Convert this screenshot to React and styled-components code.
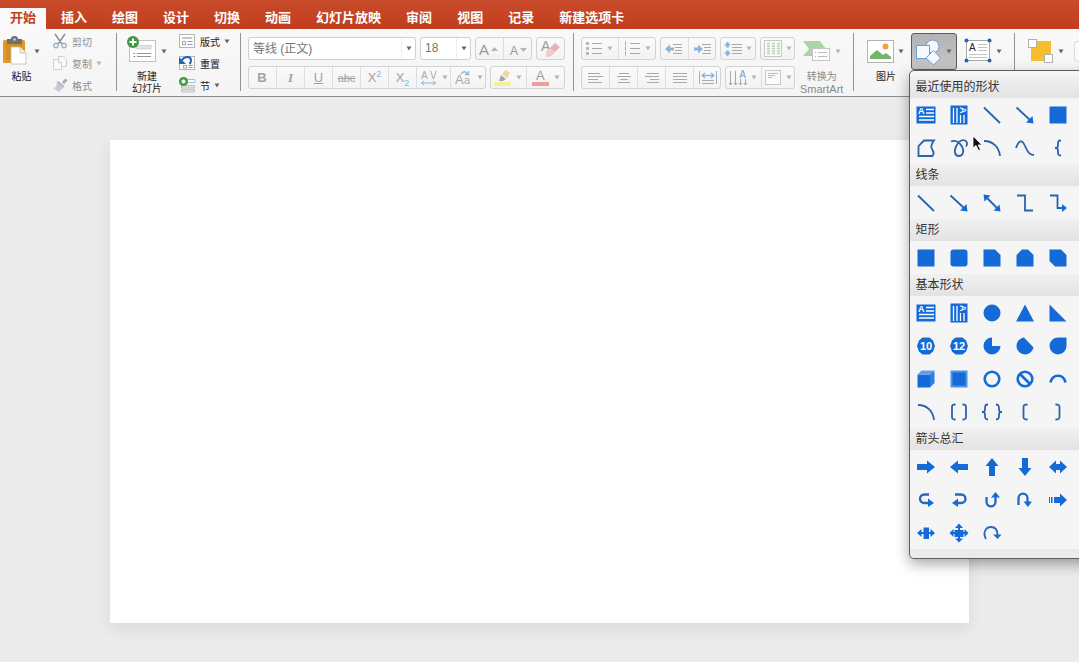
import React, { useState } from "react";
import styled, { createGlobalStyle, css } from "styled-components"

const GlobalStyle = createGlobalStyle`
  * {
    box-sizing: border-box;
  }

  body {
    margin: 0;
    background: #ebebeb;
    font-family: "Liberation Sans", "Noto Sans CJK SC", sans-serif;
  }

  button, input {
    font-family: inherit;
    margin: 0;
  }

  svg {
    display: block;
    flex: none;
  }
`

const BLUE = "#146bd8"
const LINE = "#2a62ae"
const GRAY = "#a9a9a9"
const PALE = "#8fb4dc"

const TABS = ["开始", "插入", "绘图", "设计", "切换", "动画", "幻灯片放映", "审阅", "视图", "记录", "新建选项卡"]

// ---- ribbon icons ----

const Caret = ({ faint }) => (
  <svg width="6" height="5" viewBox="0 0 6 5"><path d="M.5 .5h5L3 4.500z" fill={faint ? "#b4b4b4" : "#666"} /></svg>
)

const PasteIcon = () => (
  <svg width="27" height="30" viewBox="0 0 27 30">
    <rect x="0" y="4" width="22" height="23" rx="1.500" fill="#e09a2c" />
    <rect x="3" y="7" width="16" height="17" fill="#d88f22" />
    <path d="M4 8V3h4a3.500 3 0 0 1 7 0h4v5z" fill="#6a6f78" />
    <circle cx="11.500" cy="3.500" r="1.200" fill="#d8d8d8" />
    <path d="M8 11h9l6 6v11H8z" fill="#fff" stroke="#bbb" strokeWidth=".8" />
    <path d="M17 11v6h6" fill="#eee" stroke="#bbb" strokeWidth=".8" />
  </svg>
)

const CutIcon = () => (
  <svg width="16" height="16" viewBox="0 0 16 16" fill="none">
    <path d="M3 1l7 10M13 1L6 11" stroke="#8f8f8f" strokeWidth="1.500" />
    <circle cx="4" cy="12.500" r="2.200" stroke="#9fb6cf" strokeWidth="1.400" />
    <circle cx="12" cy="12.500" r="2.200" stroke="#9fb6cf" strokeWidth="1.400" />
  </svg>
)

const CopyIcon = () => (
  <svg width="16" height="16" viewBox="0 0 16 16" fill="#fafafa" stroke="#cfcfcf">
    <path d="M6.500 1.500h5l3 3v7h-8z" />
    <path d="M1.500 4.500h5l3 3v7h-8z" />
    <path d="M6.500 4.500v3h3" />
  </svg>
)

const BrushIcon = () => (
  <svg width="16" height="16" viewBox="0 0 16 16">
    <path d="M10 5l3.500-3.500 2 2L12 7z" fill="#a9a9a9" />
    <path d="M6 4l6.500 5-1.500 2-6.500-5z" fill="#a7bcd6" />
    <path d="M5 6l6 5-4 4-6-4c2 0 4-2 4-5z" fill="#c9c9c9" />
  </svg>
)

const Plus = ({ r = 5.5 }) => (
  <g>
    <circle cx={r} cy={r} r={r} fill="#3f9a3f" />
    <path d={`M${r} 2.5v${2 * r - 5}M2.500 ${r}h${2 * r - 5}`} stroke="#fff" strokeWidth="2" />
  </g>
)

const NewSlideIcon = () => (
  <svg width="30" height="30" viewBox="0 0 30 30">
    <rect x="2.500" y="4.500" width="26" height="21" fill="#fff" stroke="#c2c2c2" />
    <rect x="9" y="9.500" width="15" height="3.500" fill="#e4e4e4" stroke="#c8c8c8" strokeWidth=".7" />
    <path d="M10 17.500h14M10 20.500h14" stroke="#8797a9" />
    <path d="M6.500 17.500h1.500M6.500 20.500h1.500" stroke="#777" />
    <Plus r={6} />
  </svg>
)

const SlideFrame = ({ children }) => (
  <svg width="17" height="16" viewBox="0 0 17 16">
    <rect x=".5" y="1.500" width="15" height="13" fill="#fdfdfd" stroke="#b5b5b5" />
    {children}
  </svg>
)

const LayoutIcon = () => (
  <SlideFrame>
    <rect x="3" y="4" width="10" height="2" fill="#c6c6c6" />
    <rect x="3.500" y="8.500" width="3" height="3" fill="#fff" stroke="#a6a6a6" />
    <path d="M8.500 8.500h5M8.500 11.500h5" stroke="#7fa0cc" />
  </SlideFrame>
)

const ResetIcon = () => (
  <SlideFrame>
    <rect x="4.500" y="10.500" width="3" height="2.500" fill="#fff" stroke="#a6a6a6" />
    <path d="M9.500 10.500h4M9.500 12.500h4" stroke="#7fa0cc" />
    <path d="M2.500 5.500C6 .5 12 1 12 5.500c0 1.500-.5 2.500-1.500 3.500" fill="none" stroke="#2565b5" strokeWidth="2" />
    <path d="M0 2v7h7z" fill="#2565b5" />
  </SlideFrame>
)

const SectionIcon = () => (
  <svg width="17" height="16" viewBox="0 0 17 16">
    <path d="M8 2.500h8v3H8z" fill="#fff" stroke="#9cc0e0" />
    <path d="M2.500 8.500h13v2.500h-13zM2.500 12.500h13v2.500h-13z" fill="#e2e2e2" stroke="#b8b8b8" strokeWidth=".8" />
    <Plus r={4.5} />
  </svg>
)

const SpacingIcon = () => (
  <svg width="18" height="16" viewBox="0 0 18 16">
    <text x="1" y="9" fontSize="10" fill={GRAY}>A</text>
    <text x="10" y="9" fontSize="10" fill={GRAY}>V</text>
    <path d="M1 13h15M4 11l-2.500 2L4 15M13 11l2.500 2-2.500 2" fill="none" stroke={PALE} />
  </svg>
)

const CaseIcon = () => (
  <svg width="18" height="16" viewBox="0 0 18 16">
    <text x="0" y="14" fontSize="13" fill={GRAY}>A</text>
    <text x="9" y="14" fontSize="11" fill={GRAY}>a</text>
    <path d="M6 4c2-3 5-3 7 0M13.500 1v3.500H10" fill="none" stroke={PALE} strokeWidth="1.300" />
  </svg>
)

const GrowIcon = ({ down }) => (
  <svg width="20" height="16" viewBox="0 0 20 16">
    <text x={down ? 2 : 0} y="14" fontSize={down ? 12 : 15} fill="#999">A</text>
    <path d={down ? "M12 7h7l-3.500 4z" : "M12 10h7l-3.500-4z"} fill="#b5b5b5" />
  </svg>
)

const EraserIcon = () => (
  <svg width="20" height="20" viewBox="0 0 20 20">
    <text x="0" y="12" fontSize="14" fill="#999">A</text>
    <path d="M5 13l9-9 5 4-9 9-4 1z" fill="#e6b0b6" />
    <path d="M5 13l4-4 5 4-4 4-4 1z" fill="#eecdd0" />
  </svg>
)

const HighlightIcon = () => (
  <svg width="18" height="18" viewBox="0 0 18 18">
    <path d="M8 5l4-4 4 3-3 5z" fill="#f2d2a8" />
    <path d="M7 6l5 4-3 2H5z" fill="#a5a5a5" />
    <rect x="0" y="13" width="17" height="4" fill="#f1f09a" />
  </svg>
)

const FontColorIcon = () => (
  <svg width="18" height="18" viewBox="0 0 18 18">
    <text x="4" y="11" fontSize="13" fill="#999">A</text>
    <rect x="0" y="13" width="17" height="4" fill="#eda09b" />
  </svg>
)

const BulletsIcon = ({ numbered }) => (
  <svg width="17" height="16" viewBox="0 0 17 16">
    {[2.5, 7.5, 12.5].map((y) => (
      <g key={y}>
        {numbered
          ? <path d={`M1.500 ${y - 2}v4`} stroke={GRAY} />
          : <rect x="0" y={y - 1.5} width="3" height="3" rx="1" fill="#a8b4c8" />}
        <path d={`M6 ${y}h10`} stroke={GRAY} />
      </g>
    ))}
  </svg>
)

const IndentIcon = ({ right }) => (
  <svg width="18" height="16" viewBox="0 0 18 16">
    <path d="M8 3.500h9M10 6.500h7M10 9.500h7M8 12.500h9" stroke={GRAY} />
    <path d={right ? "M0 6.500h4V3.500l5 4.500-5 4.500V9.500H0z" : "M9 6.500H5V3.500L0 8l5 4.500V9.500h4z"} fill={PALE} />
  </svg>
)

const LineHeightIcon = () => (
  <svg width="18" height="16" viewBox="0 0 18 16">
    <path d="M8 3.500h10M8 6.500h10M8 9.500h10M8 12.500h10" stroke={GRAY} />
    <path d="M3.500 .5l3.500 4H5v2H2v-2H0zM3.500 15.500l3.500-4H5v-2H2v2H0z" fill={PALE} />
  </svg>
)

const ColumnsIcon = () => (
  <svg width="18" height="17" viewBox="0 0 18 17">
    <rect x=".5" y=".5" width="17" height="16" fill="#fbfbfb" stroke="#c8c8c8" />
    <path d="M3 3.500h3M3 6h3M3 8.500h3M3 11h3M3 13.500h3M8 3.500h3M8 6h3M8 8.500h3M8 11h3M8 13.500h3M13 3.500h3M13 6h3M13 8.500h3M13 11h3M13 13.500h3" stroke="#b3d6ad" strokeWidth="1.500" />
  </svg>
)

const ALIGN = {
  left: "M1 2.500h12M1 5.500h15M1 8.500h10M1 11.500h14",
  center: "M3 2.500h10M1 5.500h14M4 8.500h8M2 11.500h12",
  right: "M3 2.500h12M1 5.500h14M6 8.500h9M3 11.500h12",
  justify: "M1 2.500h14M1 5.500h14M1 8.500h14M1 11.500h14",
}

const AlignIcon = ({ type }) => (
  <svg width="16" height="14" viewBox="0 0 16 14"><path d={ALIGN[type]} stroke={GRAY} /></svg>
)

const DistributeIcon = () => (
  <svg width="18" height="16" viewBox="0 0 18 16" fill="none">
    <path d="M.5 1v13M17.500 1v13" stroke={PALE} />
    <path d="M3 5.500h12M6 3L3 5.500 6 8M12 3l3 2.500L12 8" stroke={PALE} strokeWidth="1.300" />
    <path d="M3 10.500h12M3 13.500h12" stroke={GRAY} />
  </svg>
)

const DirectionIcon = () => (
  <svg width="18" height="16" viewBox="0 0 18 16">
    <path d="M1.500 1v14M6.500 1v14M11.500 9v6M16.500 9v6M0 13l1.500 2L3 13M5 13l1.500 2L8 13M10 13l1.500 2 1.500-2M15 13l1.500 2 1.500-2" fill="none" stroke={GRAY} />
    <text x="10" y="8" fontSize="10" fontWeight="bold" fill={PALE}>A</text>
  </svg>
)

const TextAlignIcon = () => (
  <svg width="17" height="16" viewBox="0 0 17 16">
    <rect x=".5" y=".5" width="15" height="14" fill="#fbfbfb" stroke="#c8c8c8" />
    <path d="M3 3.500h10M3 5.500h7M3 7.500h4" stroke="#bbb" />
  </svg>
)

const SmartArtIcon = () => (
  <svg width="28" height="30" viewBox="0 0 28 30">
    <path d="M0 5h17l6 8-6 7H0l6-7z" fill="#a9d7a4" />
    <rect x="9.500" y="12.500" width="17" height="12" fill="#fdfdfd" stroke="#c6c6c6" />
    <path d="M12 16.500h1M15 16.500h9M12 20.500h1M15 20.500h9" stroke="#bbb" />
  </svg>
)

const PictureIcon = () => (
  <svg width="27" height="30" viewBox="0 0 27 30">
    <rect x=".5" y="4.500" width="26" height="22" fill="#fff" stroke="#b3b3b3" />
    <circle cx="18.500" cy="10.500" r="3" fill="#f0a236" />
    <path d="M3 23v-3l7-6 6 5 3-2 5 4v2z" fill="#74b566" />
  </svg>
)

const ShapesIcon = () => (
  <svg width="26" height="30" viewBox="0 0 26 30" fill="#f4f9ff" stroke="#6f9fd8">
    <circle cx="16.500" cy="9.500" r="6.500" />
    <rect x=".5" y="8.500" width="13" height="13" />
    <path d="M17.500 13.500l7 7.500-7 7-7.500-7z" />
  </svg>
)

const TextBoxIcon = () => (
  <svg width="28" height="30" viewBox="0 0 28 30">
    <rect x="2.500" y="4.500" width="23" height="20" fill="#fff" stroke="#a8a8a8" />
    <text x="5" y="15" fontSize="10" fill="#222">A</text>
    <path d="M14 8.500h9M14 11.500h9M14 14.500h9M5 18.500h18M5 21.500h18" stroke="#c2c2c2" />
    <g fill="#2f5fa8">
      <circle cx="2.500" cy="4.500" r="2" /><circle cx="25.500" cy="4.500" r="2" />
      <circle cx="2.500" cy="24.500" r="2" /><circle cx="25.500" cy="24.500" r="2" />
    </g>
  </svg>
)

const ArrangeIcon = () => (
  <svg width="26" height="30" viewBox="0 0 26 30">
    <rect x="3" y="5" width="20" height="20" fill="#f7bd2c" />
    <rect x=".5" y="3.500" width="8" height="8" fill="#fff" stroke="#b0b0b0" />
    <rect x="16.500" y="18.500" width="8" height="8" fill="#fff" stroke="#b0b0b0" />
  </svg>
)

// ---- gallery shapes, all on an 18 x 18 grid ----

const stroke = { fill: "none", stroke: LINE, strokeWidth: 1.8 }
const bend = { fill: "none", stroke: "#2468bf", strokeWidth: 2.3 }

const textBox = (
  <>
    <rect x="-.5" y=".5" width="19" height="17" fill={BLUE} />
    <text x="1" y="8" fontSize="9" fontWeight="bold" fill="#fff">A</text>
    <path d="M9 3.500h8M9 7h8M2 10.500h15M2 14h15" stroke="#fff" strokeWidth="1.300" />
  </>
)

const textBoxVertical = (
  <>
    <rect x=".5" y="-.5" width="17" height="19" fill={BLUE} />
    <text transform="translate(10 1) rotate(90)" fontSize="9" fontWeight="bold" fill="#fff">A</text>
    <path d="M3.500 2v15M7 2v15M10.500 9v8M14 9v8" stroke="#fff" strokeWidth="1.300" />
  </>
)

const polygon = (label) => (
  <>
    <path d="M5.500 .5h7L16 3.500 18 9l-2 5.500-3.500 3h-7L2 14.500 0 9l2-5.500z" fill={BLUE} />
    <text x="9" y="13" textAnchor="middle" fontSize="11" fontWeight="bold" fill="#fff">{label}</text>
  </>
)

const rightArrow = "M0 6h10V2.500L18 9l-8 6.500V12H0z"

const SHAPES = {
  textBox,
  textBoxVertical,
  line: <path d="M1 1.500L17 17" {...stroke} />,
  arrow: <><path d="M.5 1.500L14 14" {...stroke} /><path d="M17.500 17.500l-1-7.500-6.500 6.500z" fill={BLUE} /></>,
  doubleArrow: <><path d="M3 3l12 12" {...stroke} /><path d="M17.500 17.500l-1-7-6 6zM.5.5l1 7 6-6z" fill={BLUE} /></>,
  elbow: <path d="M1 1.500h8v15h8" {...stroke} />,
  elbowArrow: <><path d="M1 1.500h7.500v12.500H14" {...stroke} /><path d="M18 14l-5-4v8z" fill={BLUE} /></>,
  rect: <rect x=".5" y=".5" width="17" height="17" fill={BLUE} />,
  freeform: <path d="M1.500 17V7L7 1.500h10C13.500 6 14 9 15.500 11c1.500 2 1.500 4 0 6z" {...stroke} />,
  scribble: <path d="M1 2.500c4-1.500 8 0 11 5 2.500 4.500 1 9.500-3 9.500s-5.500-4.500-3-9.500C8.500 2.500 12 .5 15 1.500c2.500 1 2.500 4 1 6" {...stroke} />,
  arc: <path d="M1 2c9 0 15 6 16 15" {...stroke} />,
  curve: <path d="M0 9C3 1 6 0 9 7c3 7 5 9 9 9" {...stroke} />,
  leftBrace: <path d="M12 1.500c-3 0-3 1-3 4S8.500 9 6 9c2.500 0 3 .5 3 3.500s0 4 3 4" {...stroke} />,
  roundRect: <rect x=".5" y=".5" width="17" height="17" rx="3" fill={BLUE} />,
  snipOne: <path d="M.5.5H12l5.500 5.500v11.500H.5z" fill={BLUE} />,
  snipTop: <path d="M6 .5h6l5.500 5.500v11.500H.5V6z" fill={BLUE} />,
  snipDiagonal: <path d="M.5.5H12l5.500 5.500v11.500H6L.5 12z" fill={BLUE} />,
  circle: <circle cx="9" cy="9" r="8.500" fill={BLUE} />,
  triangle: <path d="M9 .5l9 17H0z" fill={BLUE} />,
  rightTriangle: <path d="M.5.5l17 17H.5z" fill={BLUE} />,
  ten: polygon("10"),
  twelve: polygon("12"),
  pie: <path d="M9 .5a8.500 8.500 0 1 0 8.500 8.500H9z" fill={BLUE} />,
  chord: <path d="M8 .5l9.500 10C16.500 14.500 13 17.500 9 17.500A8.500 8.500 0 0 1 .5 9C.5 4.500 4 1 8 .5z" fill={BLUE} />,
  teardrop: <path d="M17.500.5V9A8.500 8.500 0 1 1 9 .5z" fill={BLUE} />,
  cube: (
    <>
      <path d="M.5 4.500h12.500v13H.5z" fill={BLUE} />
      <path d="M.5 4.500l4-4h13L13 4.500z" fill="#5f9deb" />
      <path d="M13 4.500l4.500-4V13L13 17.500z" fill="#2f7ee2" />
    </>
  ),
  bevel: <><rect x=".5" y=".5" width="17" height="17" fill="#4f93ea" /><rect x="2.500" y="2.500" width="13" height="13" fill={BLUE} /></>,
  donut: <circle cx="9" cy="9" r="7.300" fill="none" stroke={BLUE} strokeWidth="2.600" />,
  noSymbol: <><circle cx="9" cy="9" r="7.300" fill="none" stroke={BLUE} strokeWidth="2.600" /><path d="M4 4l10 10" stroke={BLUE} strokeWidth="2.600" /></>,
  blockArc: <path d="M1.500 12.500c2-9 13-9 15 0" fill="none" stroke={BLUE} strokeWidth="2.600" />,
  brackets: <path d="M5.500 1.500c-3 0-3.500.5-3.500 2.500v10c0 2 .5 2.500 3.500 2.500M12.500 1.500c3 0 3.500.5 3.500 2.500v10c0 2-.5 2.500-3.500 2.500" {...stroke} />,
  braces: <path d="M5 1.500c-2.500 0-3 1-3 4S1.500 9-1 9c2.500 0 3 .5 3 3.500s.5 4 3 4M13 1.500c2.500 0 3 1 3 4s.5 3.500 3 3.500c-2.500 0-3 .5-3 3.500s-.5 4-3 4" {...stroke} />,
  leftBracket: <path d="M11.500 1.500C8 1.500 7.500 2 7.500 4v10c0 2 .5 2.500 4 2.500" {...stroke} />,
  rightBracket: <path d="M6.500 1.500c3.500 0 4 .5 4 2.500v10c0 2-.5 2.500-4 2.500" {...stroke} />,
  right: <path d={rightArrow} fill={BLUE} />,
  left: <path d={rightArrow} fill={BLUE} transform="rotate(180 9 9)" />,
  up: <path d={rightArrow} fill={BLUE} transform="rotate(-90 9 9)" />,
  down: <path d={rightArrow} fill={BLUE} transform="rotate(90 9 9)" />,
  leftRight: <path d="M0 9l7-6.500v3.500h4V2.500L18 9l-7 6.500V12H7v3.500z" fill={BLUE} />,
  curveRight: <><path d="M12 3.500H7.500c-6 0-6 8.500 0 8.500H12" {...bend} /><path d="M11 7.500l6 4.500-6 4z" fill={BLUE} /></>,
  curveLeft: <><path d="M5 3.500h6c6 0 6 8.500 0 8.500H7" {...bend} /><path d="M8 7.500L2 12l6 4z" fill={BLUE} /></>,
  curveUp: <><path d="M3.500 6v4.500c0 6.500 9 6.500 9 0V5" {...bend} /><path d="M8 6.500l4.500-5.500L17 6.500z" fill={BLUE} /></>,
  curveDown: <><path d="M2.500 14V7.500c0-6.500 9-6.500 9 0V11" {...bend} /><path d="M7.500 10.500l4.500 5.500 4-5.500z" fill={BLUE} /></>,
  striped: <path d="M0 6h1v6H0zM2 6h1.500v6H2zM5 6h6V2.500L18 9l-7 6.500V12H5z" fill={BLUE} />,
  leftRightCallout: <path d="M0 9l4.500-4v3h2V3.500h5.500v4.500h1.500V5l4.500 4-4.500 4v-3H12v5H6.500v-5h-2v3z" fill={BLUE} />,
  quadCallout: <path d="M9-.5l4 4.500h-3v2h3.500V8h1V5L18.500 9l-4 4v-3h-1v3h-3.500v1.500h3L9 18.500 5 14.500h3V13H4.500v-3h-1v3L-.5 9l4-4v3h1V6H8V4H5z" fill={BLUE} />,
  circular: <><path d="M3 15C-.5 9 2.500 3 8 3c4.500 0 6.500 3 6.500 8" {...bend} strokeWidth="1.800" /><path d="M10 10.500l4.500 4.500 4-4.500z" fill={BLUE} /></>,
}

const GALLERY = [
  {
    title: "最近使用的形状",
    shapes: ["textBox", "textBoxVertical", "line", "arrow", "rect", "freeform", "scribble", "arc", "curve", "leftBrace"],
  },
  { title: "线条", shapes: ["line", "arrow", "doubleArrow", "elbow", "elbowArrow"] },
  { title: "矩形", shapes: ["rect", "roundRect", "snipOne", "snipTop", "snipDiagonal"] },
  {
    title: "基本形状",
    shapes: [
      "textBox", "textBoxVertical", "circle", "triangle", "rightTriangle",
      "ten", "twelve", "pie", "chord", "teardrop",
      "cube", "bevel", "donut", "noSymbol", "blockArc",
      "arc", "brackets", "braces", "leftBracket", "rightBracket",
    ],
  },
  {
    title: "箭头总汇",
    shapes: [
      "right", "left", "up", "down", "leftRight",
      "curveRight", "curveLeft", "curveUp", "curveDown", "striped",
      "leftRightCallout", "quadCallout", "circular",
    ],
  },
]

// big ribbon button, icon and arrow on top and the label below
const Big = ({ icon, children, faint, ...rest }) => (
  <BigButton $faint={faint} {...rest}>
    <IconRow>{icon}<Caret faint={faint} /></IconRow>
    {children}
  </BigButton>
)

const Small = ({ icon, children, faint, caret }) => (
  <SmallButton $faint={faint}>
    {icon}<span>{children}</span>{caret && <Caret faint={faint} />}
  </SmallButton>
)

const App = () => {

  const [tab, setTab] = useState("开始")

  // the shape gallery is toggled by its ribbon button
  const [isOpen, setIsOpen] = useState(true)

  return (
    <Page>
      <GlobalStyle />
      <TabBar>
        {TABS.map((name) => (
          <Tab key={name} $active={name === tab} onClick={() => setTab(name)}>{name}</Tab>
        ))}
      </TabBar>
      <Ribbon>
        <Group>
          <PasteSlot>
            <Big icon={<PasteIcon />}>粘贴</Big>
          </PasteSlot>
          <Stack $width="64px">
            <Small icon={<CutIcon />} faint>剪切</Small>
            <Small icon={<CopyIcon />} faint caret>复制</Small>
            <Small icon={<BrushIcon />} faint>格式</Small>
          </Stack>
        </Group>
        <Group>
          <SlideSlot>
            <Big icon={<NewSlideIcon />}>新建<br />幻灯片</Big>
          </SlideSlot>
          <Stack $width="61px">
            <Small icon={<LayoutIcon />} caret>版式</Small>
            <Small icon={<ResetIcon />}>重置</Small>
            <Small icon={<SectionIcon />} caret>节</Small>
          </Stack>
        </Group>
        <Group>
          <Tools>
            <ToolRow>
              <Combo $width="168px">
                <input aria-label="字体" defaultValue="等线 (正文)" />
                <button aria-label="选择字体"><Caret /></button>
              </Combo>
              <Combo $width="51px">
                <input aria-label="字号" defaultValue="18" />
                <button aria-label="选择字号"><Caret /></button>
              </Combo>
              <Segment>
                <Tool $width="28px" aria-label="增大字号"><GrowIcon /></Tool>
                <Tool $width="29px" aria-label="减小字号"><GrowIcon down /></Tool>
              </Segment>
              <Segment>
                <Tool $width="29px" aria-label="清除格式"><EraserIcon /></Tool>
              </Segment>
            </ToolRow>
            <ToolRow>
              <Segment>
                <Tool $width="28px"><b>B</b></Tool>
                <Tool $width="28px"><Italic>I</Italic></Tool>
                <Tool $width="28px"><u>U</u></Tool>
                <Tool $width="28px"><Struck>abc</Struck></Tool>
                <Tool $width="28px"><span>X<sup>2</sup></span></Tool>
                <Tool $width="28px"><span>X<sub>2</sub></span></Tool>
                <Tool $width="34px" aria-label="字符间距"><SpacingIcon /><Caret faint /></Tool>
                <Tool $width="36px" aria-label="更改大小写"><CaseIcon /><Caret faint /></Tool>
              </Segment>
              <Segment>
                <Tool $width="36px" aria-label="突出显示"><HighlightIcon /><Caret faint /></Tool>
                <Tool $width="39px" aria-label="字体颜色"><FontColorIcon /><Caret faint /></Tool>
              </Segment>
            </ToolRow>
          </Tools>
        </Group>
        <Group>
          <Tools $end="5px">
            <ToolRow>
              <Segment>
                <Tool $width="37px" aria-label="项目符号"><BulletsIcon /><Caret faint /></Tool>
                <Tool $width="38px" aria-label="编号"><BulletsIcon numbered /><Caret faint /></Tool>
              </Segment>
              <Segment>
                <Tool $width="28px" aria-label="减少缩进"><IndentIcon /></Tool>
                <Tool $width="28px" aria-label="增加缩进"><IndentIcon right /></Tool>
              </Segment>
              <Segment>
                <Tool $width="36px" aria-label="行距"><LineHeightIcon /><Caret faint /></Tool>
              </Segment>
              <Segment>
                <Tool $width="35px" aria-label="分栏"><ColumnsIcon /><Caret faint /></Tool>
              </Segment>
            </ToolRow>
            <ToolRow>
              <Segment>
                {Object.keys(ALIGN).map((type) => (
                  <Tool key={type} $width="28px" aria-label={type}><AlignIcon type={type} /></Tool>
                ))}
                <Tool $width="28px" aria-label="分散对齐"><DistributeIcon /></Tool>
              </Segment>
              <Segment>
                <Tool $width="36px" aria-label="文字方向"><DirectionIcon /><Caret faint /></Tool>
                <Tool $width="34px" aria-label="对齐文本"><TextAlignIcon /><Caret faint /></Tool>
              </Segment>
            </ToolRow>
          </Tools>
          <SmartArtSlot>
            <Big icon={<SmartArtIcon />} faint>转换为<Latin>SmartArt</Latin></Big>
          </SmartArtSlot>
        </Group>
        <Group>
          <InsertSlot>
            <Big icon={<PictureIcon />}>图片</Big>
            <Dropdown>
              <PressedButton aria-label="形状" aria-expanded={isOpen} onClick={() => setIsOpen(!isOpen)}>
                <ShapesIcon /><Caret />
              </PressedButton>
              {isOpen && (
                <Popover>
                  {GALLERY.map(({ title, shapes }) => (
                    <section key={title}>
                      <Heading>{title}</Heading>
                      <ShapeGrid>
                        {shapes.map((name) => (
                          <ShapeButton key={name} aria-label={name}>
                            <svg width="18" height="18" viewBox="0 0 18 18" overflow="visible">{SHAPES[name]}</svg>
                          </ShapeButton>
                        ))}
                      </ShapeGrid>
                    </section>
                  ))}
                  <Footer />
                  <Pointer width="11" height="17" viewBox="0 0 11 17">
                    <path d="M1 1v12l3-2.500 2.500 5 2-1-2.500-4.500h4z" fill="#111" stroke="#fff" strokeWidth=".8" />
                  </Pointer>
                </Popover>
              )}
            </Dropdown>
            <Big icon={<TextBoxIcon />} aria-label="文本框" />
          </InsertSlot>
        </Group>
        <Group>
          <ArrangeSlot>
            <Big icon={<ArrangeIcon />} aria-label="排列" />
            <StyleBox />
          </ArrangeSlot>
        </Group>
      </Ribbon>
      <Canvas>
        <Slide />
      </Canvas>
    </Page>
  );
}

const plain = css`
  border: none;
  background: none;
  padding: 0;
`

const Page = styled.div`
  overflow: hidden;
  min-height: 100vh;
`

const TabBar = styled.nav`
  display: flex;
  align-items: flex-end;
  height: 29px;
  overflow: hidden;
  background: linear-gradient(#c94c2b, #c13d1e);
`

const Tab = styled.button`
  ${plain}
  flex: none;
  height: 21px;
  padding: 0 12px 2px 13px;
  font-size: 13px;
  line-height: 18px;
  font-weight: bold;
  color: #fff;

  ${({ $active }) => $active && css`
    padding: 0 10px 2px;
    margin-right: 2px;
    background: #f9f9f9;
    color: #c5401f;
  `}
`

const Ribbon = styled.header`
  position: relative;
  z-index: 1;
  display: flex;
  height: 68px;
  background: linear-gradient(#f9f9f9, #f4f4f4);
  border-bottom: 1px solid #8c8c8c;
`

const Group = styled.div`
  display: flex;
  flex: none;

  &:last-child {
    flex: 1;
    min-width: 0;
  }

  &:not(:last-child)::after {
    content: "";
    width: 1px;
    margin: 4px 0 5px;
    background: #949494;
  }
`

const BigButton = styled.button`
  ${plain}
  display: block;
  padding-top: 7px;
  font-size: 10px;
  line-height: 12px;
  color: ${({ $faint }) => $faint ? "#8a8a8a" : "#1c1c1c"};
  white-space: nowrap;
`

const IconRow = styled.span`
  display: flex;
  align-items: center;
  justify-content: center;
  gap: 4px;
  margin-bottom: 5px;
`

const Latin = styled.span`
  display: block;
  font-size: 11px;
`

const PasteSlot = styled.div`
  padding: 0 12px 0 3px;
`

const SlideSlot = styled.div`
  padding: 0 12px 0 10px;
`

const SmartArtSlot = styled.div`
  padding-right: 10px;
`

const InsertSlot = styled.div`
  display: flex;
  align-items: flex-start;
  gap: 7px;
  padding: 0 12px 0 13px;
`

const ArrangeSlot = styled.div`
  display: flex;
  align-items: flex-start;
  flex: 1;
  gap: 10px;
  padding-left: 13px;
`

// style gallery, it runs on to the edge of the window
const StyleBox = styled.div`
  flex: 1;
  height: 21px;
  margin-top: 12px;
  border: 1px solid #dcdcdc;
  border-right: none;
  border-radius: 4px 0 0 4px;
  background: #fbfbfb;
`

const Stack = styled.div`
  display: flex;
  flex-direction: column;
  width: ${({ $width }) => $width};
  padding-top: 1px;
`

const SmallButton = styled.button`
  ${plain}
  display: flex;
  align-items: center;
  gap: 4px;
  height: 22px;
  font-size: 10px;
  color: ${({ $faint }) => $faint ? "#8f8f8f" : "#1c1c1c"};
`

const Tools = styled.div`
  display: flex;
  flex-direction: column;
  gap: 6px;
  padding: 8px ${({ $end }) => $end || "8px"} 0 7px;
`

const ToolRow = styled.div`
  display: flex;
  gap: 4px;
  height: 23px;
`

const Combo = styled.div`
  display: flex;
  width: ${({ $width }) => $width};
  border: 1px solid #cfcfcf;
  border-radius: 3px;
  background: #fff;

  input {
    flex: 1;
    min-width: 0;
    padding: 0 0 2px 4px;
    border: none;
    outline: none;
    background: none;
    font-size: 12px;
    color: #757575;
  }

  button {
    ${plain}
    display: flex;
    align-items: center;
    justify-content: center;
    width: 14px;
    border-left: 1px solid #f0f0f0;
  }
`

const Segment = styled.div`
  display: flex;
  border: 1px solid #d2d2d2;
  border-radius: 3px;
  background: linear-gradient(#fafafa, #f3f3f3);
`

const Tool = styled.button`
  ${plain}
  display: flex;
  align-items: center;
  justify-content: center;
  gap: 4px;
  width: ${({ $width }) => $width};
  font-size: 13px;
  line-height: 16px;
  color: #a2a2a2;

  & + & {
    border-left: 1px solid #dedede;
  }

  /* the frame of the segment takes a pixel from each end */
  &:first-child {
    margin-left: -1px;
  }

  &:last-child {
    margin-right: -1px;
  }

  sup, sub {
    font-size: 9px;
    line-height: 0;
    color: ${PALE};
  }
`

const Italic = styled.i`
  font-family: "Liberation Serif", serif;
  font-weight: bold;
`

const Struck = styled.s`
  font-size: 11px;
`

const Dropdown = styled.div`
  position: relative;
  padding-top: 4px;
`

const PressedButton = styled.button`
  display: flex;
  align-items: center;
  justify-content: center;
  gap: 4px;
  width: 46px;
  height: 37px;
  padding: 0;
  border: 1px solid #5c5c5c;
  border-radius: 3px;
  background: linear-gradient(#b3b3b3, #c6c6c6);
`

const Popover = styled.div`
  position: absolute;
  top: 41px;
  left: -2px;
  width: 192px;
  padding-top: 5px;
  border: 1px solid #5e5e5e;
  border-radius: 5px;
  background: #f5f5f5;
  box-shadow: 0 5px 14px rgba(0, 0, 0, 0.35);
`

const Heading = styled.h3`
  height: 22px;
  margin: 0;
  padding-left: 5px;
  background: linear-gradient(#f0f0f0, #e3e3e3);
  font-size: 12px;
  line-height: 22px;
  font-weight: normal;
  color: #333;
`

const ShapeGrid = styled.div`
  display: grid;
  grid-template-columns: repeat(5, 33px);
  grid-auto-rows: 33px;
`

const ShapeButton = styled.button`
  ${plain}
  display: flex;
  align-items: center;
  padding-left: 7px;
`

const Footer = styled.div`
  height: 9px;
  border-radius: 0 0 5px 5px;
  background: #ebebeb;
`

const Pointer = styled.svg`
  position: absolute;
  top: 64px;
  left: 62px;
`

const Canvas = styled.main`
  padding: 43px 110px 39px;
`

const Slide = styled.div`
  aspect-ratio: 16 / 9;
  background: #fff;
  box-shadow: 0 6px 14px rgba(0, 0, 0, 0.08);
`

export default App;
